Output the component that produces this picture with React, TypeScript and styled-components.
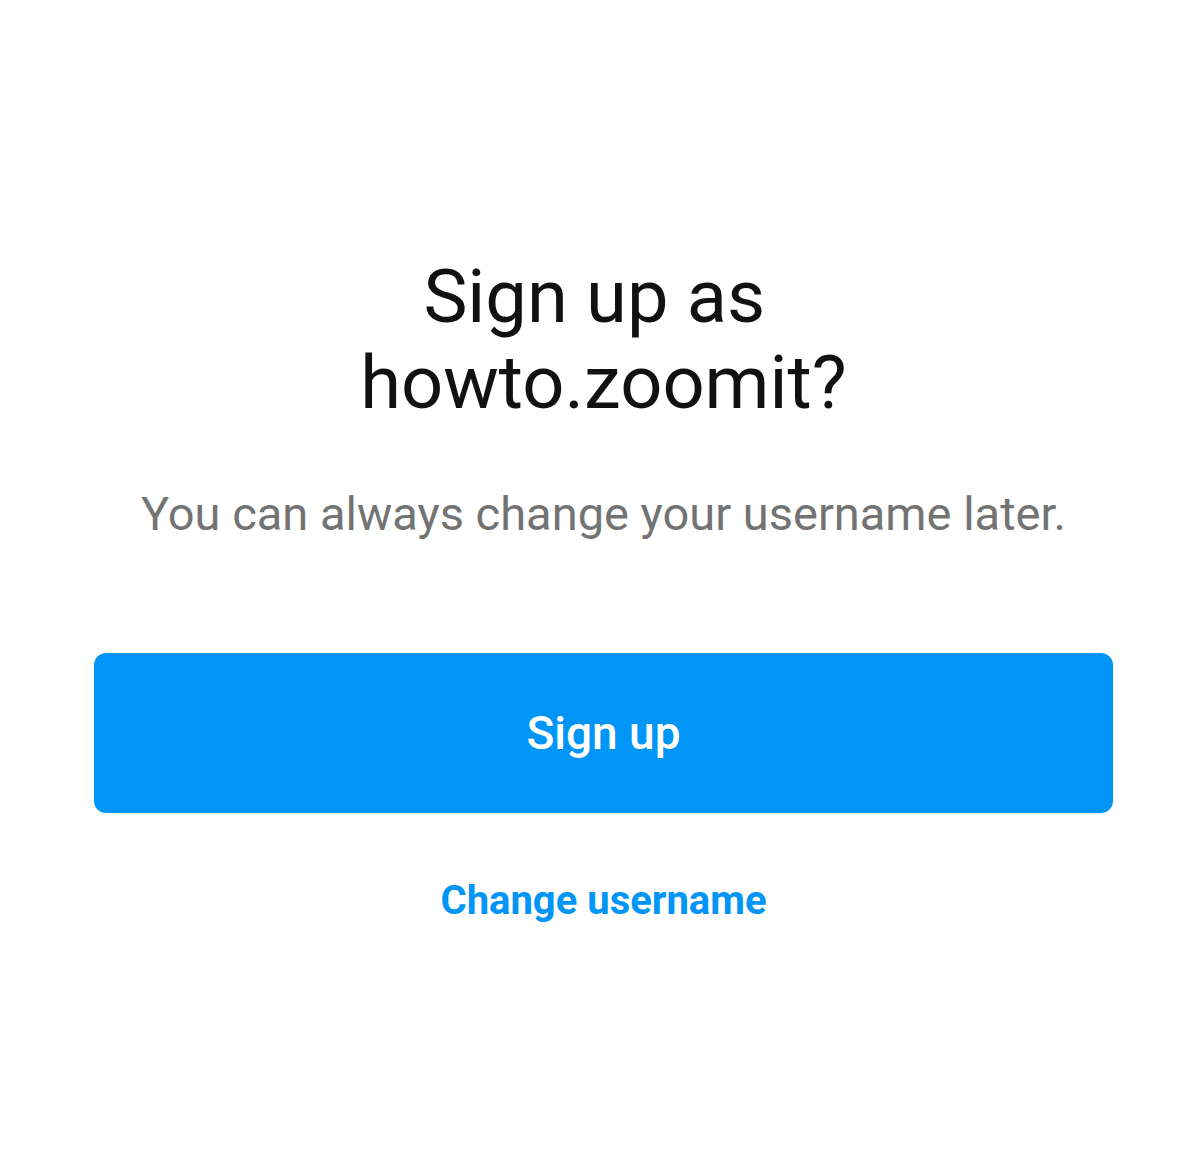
import React from "react";
import styled, { createGlobalStyle } from "styled-components";

const GlobalStyle = createGlobalStyle`
  html, body {
    margin: 0;
    padding: 0;
    background: #ffffff;
  }
  body {
    font-family: Roboto, "Liberation Sans", Arial, sans-serif;
  }
`;

const Screen = styled.div`
  width: 1200px;
  height: 1176px;
  box-sizing: border-box;
  padding: 254px 87px 0 94px;
  display: flex;
  flex-direction: column;
  align-items: center;
  background: #fff;
`;

// wraps naturally; the kept trailing space nudges line one left, as on the device
const Title = styled.h1`
  margin: 0;
  max-width: 520px;
  font-size: 74px;
  line-height: 86px;
  font-weight: 400;
  color: #111;
  text-align: center;
  white-space: break-spaces;
`;

const Subtitle = styled.p`
  margin: 61px 0 0;
  font-size: 47px;
  line-height: 53px;
  color: #737373;
  text-align: center;
`;

const PrimaryButton = styled.button`
  margin-top: 113px;
  width: 100%;
  height: 160px;
  border: none;
  border-radius: 12px;
  background: #0095f6;
  color: #fff;
  font-family: inherit;
  font-size: 46px;
  font-weight: 500;
  display: flex;
  align-items: center;
  justify-content: center;
  cursor: pointer;
`;

const LinkButton = styled.button`
  margin-top: 64px;
  padding: 0;
  border: none;
  background: none;
  color: #0095f6;
  font-family: inherit;
  font-size: 40px;
  line-height: 47px;
  font-weight: 700;
  cursor: pointer;
`;

const App = () => {
  const username = "howto.zoomit";

  return (
    <>
      <GlobalStyle />
      <Screen>
        <Title>Sign up as {username}?</Title>
        <Subtitle>You can always change your username later.</Subtitle>
        <PrimaryButton>Sign up</PrimaryButton>
        <LinkButton>Change username</LinkButton>
      </Screen>
    </>
  );
};

export default App;
